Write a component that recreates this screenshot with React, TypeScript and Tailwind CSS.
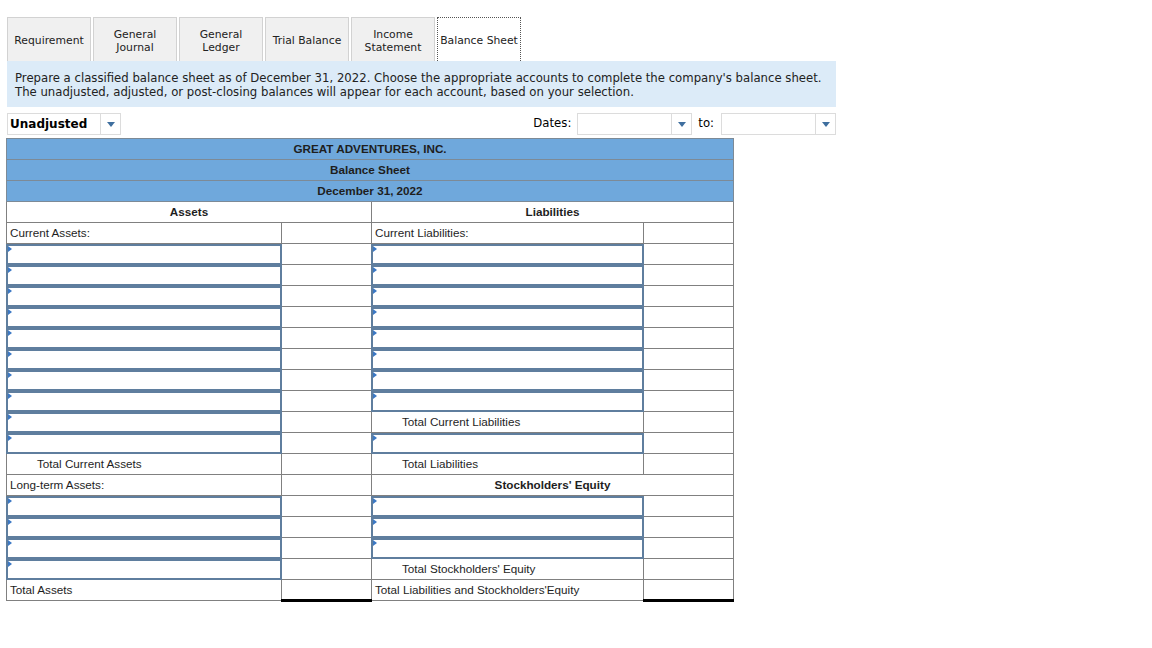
import React from "react";

const tabs: { l1: string; l2?: string; active?: boolean }[] = [
  { l1: "Requirement" },
  { l1: "General", l2: "Journal" },
  { l1: "General", l2: "Ledger" },
  { l1: "Trial Balance" },
  { l1: "Income", l2: "Statement" },
  { l1: "Balance Sheet", active: true },
];

type Cell =
  | { k: "text"; t: string; indent?: boolean; bold?: boolean; center?: boolean; span?: number }
  | { k: "input" }
  | { k: "blank"; topBlack?: boolean; bottomThick?: boolean };

const T = (t: string, indent = false): Cell => ({ k: "text", t, indent });
const I: Cell = { k: "input" };
const B: Cell = { k: "blank" };
const BT: Cell = { k: "blank", topBlack: true };
const BTT: Cell = { k: "blank", topBlack: true, bottomThick: true };

const rows: Cell[][] = [
  [T("Current Assets:"), B, T("Current Liabilities:"), B],
  [I, B, I, B],
  [I, B, I, B],
  [I, B, I, B],
  [I, B, I, B],
  [I, B, I, B],
  [I, B, I, B],
  [I, B, I, B],
  [I, B, I, B],
  [I, B, T("Total Current Liabilities", true), BT],
  [I, B, I, B],
  [T("Total Current Assets", true), BT, T("Total Liabilities", true), BT],
  [T("Long-term Assets:"), B, { k: "text", t: "Stockholders' Equity", bold: true, center: true, span: 2 }],
  [I, B, I, B],
  [I, B, I, B],
  [I, B, I, B],
  [I, B, T("Total Stockholders' Equity", true), BT],
  [T("Total Assets"), BTT, T("Total Liabilities and Stockholders'Equity"), BTT],
];

function Arrow() {
  return (
    <span className="inline-block w-0 h-0 border-x-[4px] border-x-transparent border-t-[5px] border-t-[#3f6f9f]" />
  );
}

function Dropdown({ w, label, bold }: { w: string; label?: string; bold?: boolean }) {
  return (
    <div className={`flex h-[22px] border border-[#dcdcdc] bg-white ${w}`}>
      <div className={`flex-1 flex items-center pl-[2px] text-[12px] text-black ${bold ? "font-bold" : ""}`}>{label}</div>
      <div className="w-[20px] border-l border-[#dcdcdc] flex items-center justify-center">
        <Arrow />
      </div>
    </div>
  );
}

function InputCell() {
  return (
    <div className="relative h-[21px] border-2 border-[#5f7e9e] bg-white -m-px">
      <span className="absolute top-0 left-0 w-0 h-0 border-y-[3px] border-y-transparent border-l-[4px] border-l-[#3b78c4]" />
    </div>
  );
}

export default function App() {
  const font = { fontFamily: "'DejaVu Sans', Verdana, sans-serif" };
  return (
    <div className="w-[1152px] h-[648px] bg-white" style={font}>
      <div className="pt-[17px] pl-[7px]">
        <div className="flex gap-[2px]">
          {tabs.map((t, i) => (
            <div
              key={i}
              className={`w-[84px] h-[44px] pt-[2px] flex flex-col items-center justify-center text-[10.8px] leading-[13px] text-[#222] ${
                t.active
                  ? "bg-white border border-dotted border-[#555] border-b-0"
                  : "bg-[#f0f0f0] border border-[#d2d2d2] border-b-0"
              }`}
            >
              <span>{t.l1}</span>
              {t.l2 && <span>{t.l2}</span>}
            </div>
          ))}
        </div>
        <div className="w-[829px] h-[46px] bg-[#dcebf8] px-[8px] pt-[10px] text-[11.7px] leading-[14px] text-[#222] whitespace-nowrap">
          <div>Prepare a classified balance sheet as of December 31, 2022. Choose the appropriate accounts to complete the company's balance sheet.</div>
          <div>The unadjusted, adjusted, or post-closing balances will appear for each account, based on your selection.</div>
        </div>
        <div className="flex items-center mt-[6px] w-[829px]">
          <Dropdown w="w-[114px]" label="Unadjusted" bold />
          <div className="flex-1" />
          <span className="text-[11.7px] mr-[6px]">Dates:</span>
          <Dropdown w="w-[115px]" />
          <span className="text-[11.7px] ml-[6px] mr-[7px]">to:</span>
          <Dropdown w="w-[115px]" />
        </div>
      </div>
      <div className="pl-[6px] mt-[3px]" style={{ fontFamily: "'Liberation Sans', Arial, sans-serif" }}>
        <table className="border-collapse text-[11.7px] text-[#1e1e1e] table-fixed w-[727px]">
          <colgroup>
            <col className="w-[275px]" />
            <col className="w-[90px]" />
            <col className="w-[272px]" />
            <col className="w-[90px]" />
          </colgroup>
          <tbody>
            {["GREAT ADVENTURES, INC.", "Balance Sheet", "December 31, 2022"].map((h) => (
              <tr key={h}>
                <td colSpan={4} className="h-[21px] p-0 bg-[#6fa8dc] border border-[#7d8a96] text-center font-bold">
                  {h}
                </td>
              </tr>
            ))}
            <tr>
              <td colSpan={2} className="h-[21px] p-0 pb-px border border-[#808080] text-center font-bold">Assets</td>
              <td colSpan={2} className="h-[21px] p-0 pb-px border border-[#808080] text-center font-bold">Liabilities</td>
            </tr>
            {rows.map((r, ri) => (
              <tr key={ri}>
                {r.map((c, ci) => {
                  if (c.k === "input")
                    return (
                      <td key={ci} className="h-[21px] p-0 border border-[#808080]">
                        <InputCell />
                      </td>
                    );
                  if (c.k === "blank")
                    return (
                      <td
                        key={ci}
                        className={`h-[21px] p-0 border border-[#808080] ${c.topBlack ? "border-t-black" : ""} ${
                          c.bottomThick ? "border-b-[3px] border-b-black" : ""
                        }`}
                      />
                    );
                  return (
                    <td
                      key={ci}
                      colSpan={c.span}
                      className={`h-[21px] p-0 pb-px border border-[#808080] whitespace-nowrap ${
                        c.center ? "text-center" : c.indent ? "pl-[30px]" : "pl-[3px]"
                      } ${c.bold ? "font-bold" : ""} ${c.span ? "border-t-black" : ""}`}
                    >
                      {c.t}
                    </td>
                  );
                })}
              </tr>
            ))}
          </tbody>
        </table>
      </div>
    </div>
  );
}
